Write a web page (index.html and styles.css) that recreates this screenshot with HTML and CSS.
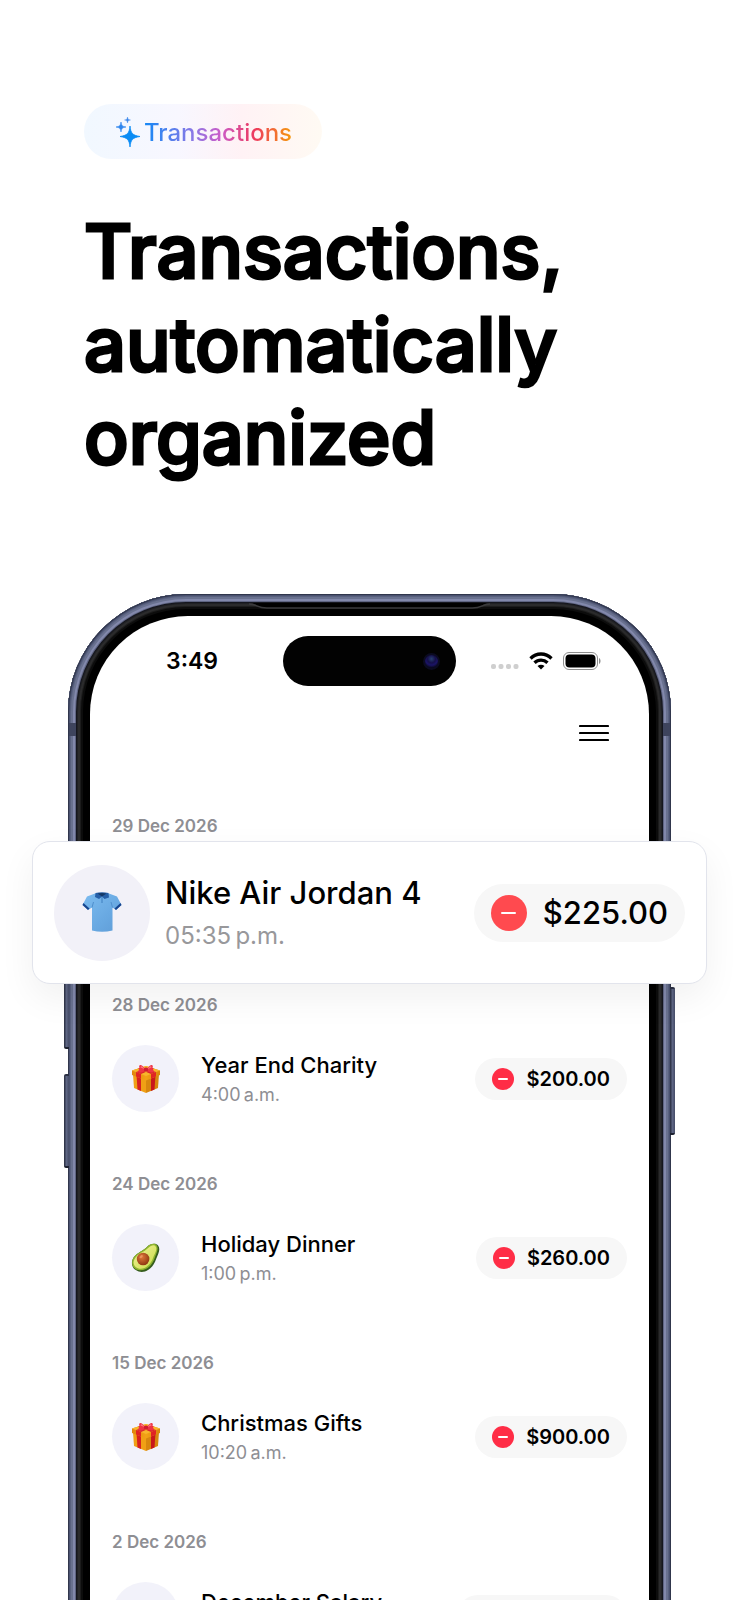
FILE: index.html
```html
<!DOCTYPE html>
<html lang="en">
<head>
  <meta charset="UTF-8" />
  <meta name="viewport" content="width=device-width, initial-scale=1.0"/>
  <title>Transactions, automatically organized</title>
  <link rel="stylesheet" href="styles.css">
</head>
<body>
  <!-- shared drawings -->
  <svg class="defs" width="0" height="0" aria-hidden="true">
    <defs>
      <linearGradient id="shirtFill" x1="0" y1="0" x2="1" y2="1">
        <stop offset="0" stop-color="#7cbcf0"/><stop offset="0.6" stop-color="#69a9e2"/><stop offset="1" stop-color="#5f9cd6"/>
      </linearGradient>
      <linearGradient id="boxFill" x1="0" y1="0" x2="1" y2="0">
        <stop offset="0" stop-color="#e0850c"/><stop offset="0.5" stop-color="#f3a316"/><stop offset="1" stop-color="#d9860c"/>
      </linearGradient>
      <linearGradient id="avoFill" x1="0" y1="0" x2="1" y2="1">
        <stop offset="0" stop-color="#f3f29a"/><stop offset="1" stop-color="#c9dc49"/>
      </linearGradient>
      <radialGradient id="pitFill" cx="0.4" cy="0.35" r="0.7">
        <stop offset="0" stop-color="#e0793a"/><stop offset="1" stop-color="#8a3410"/>
      </radialGradient>
    </defs>
    <symbol id="gift" viewBox="0 0 30 30">
      <path d="M2 10 L15 14.500 V29 L3 24 Z" fill="#f0a015"/>
      <path d="M28 10 L15 14.500 V29 L27 24 Z" fill="#d8870e"/>
      <path d="M5.500 11 L10 13 V27 L6.500 25.500 Z" fill="#d8201f"/>
      <path d="M24.500 11 L20 13 V27 L23.500 25.500 Z" fill="#c9181c"/>
      <path d="M15 2 L29 6.500 V11 L15 16.500 L1 11 V6.500 Z" fill="url(#boxFill)"/>
      <path d="M1 6.500 L15 2 L29 6.500 L15 12 Z" fill="#f8b52b"/>
      <path d="M5 8 L10 10 V14.500 L5 12.500 Z M25 8 L20 10 V14.500 L25 12.500 Z" fill="#e02424"/>
      <path d="M5 8 L19 3.300 L23 4.600 L10 10 Z M25 8 L11 3.300 L7 4.600 L20 10 Z" fill="#d8242a"/>
      <path d="M14 5 C11 0 7 0 8.500 4 L7 8 C10 9.500 13 8 15 6 C17 8 21 9.500 23 7.500 L21.500 4 C23 0 19 0 16 5 Z" fill="#ee3344"/>
      <path d="M13.500 5 C11.500 2 9.500 1.500 9.500 3.500 Z M16.500 5 C18.500 2 20.500 1.500 20.500 3.500 Z" fill="#ff7880"/>
      <rect x="13" y="3.500" width="4" height="4" rx="1.500" fill="#cf1c30"/>
    </symbol>
    <symbol id="avocado" viewBox="0 0 30 30">
      <path d="M28 2 C31 6 28 11 26 16 C23 25 16 31 8 29 C1 27 -1 20 3 14 C7 9 12 8 17 3 C20 0 26 -1 28 2 Z" fill="#355c1d"/>
      <path d="M26.500 1.700 C29 5 26.500 9.500 24.500 15 C22 23 15 29 8 27.500 C1 26 -0.500 19.500 3 14 C7 9 12 8 17 3 C20 0 24.500 -0.500 26.500 1.700 Z" fill="#8fb52f"/>
      <path d="M25.500 3 C27.500 6 25 9.500 23 14.500 C20.500 22 14.500 27 8.500 26 C2.500 24.500 1 19.500 4.500 14.800 C8 10 13 9.500 18 4.500 C20.500 2 24 1 25.500 3 Z" fill="url(#avoFill)"/>
      <circle cx="12.500" cy="16" r="6.500" fill="url(#pitFill)"/>
      <ellipse cx="10.500" cy="13.500" rx="2" ry="1.200" fill="#f2a470" opacity="0.700" transform="rotate(-40 10.500 13.500)"/>
    </symbol>
  </svg>

  <main class="page">
    <header class="hero">
      <div class="badge">
        <svg class="badge-icon" viewBox="0 0 24 30" aria-hidden="true">
          <path fill="#0a8cf5" d="M14 9 C14.800 16.500 16.500 18.200 24 19.500 C16.500 20.800 14.800 22.500 14 30 C13.200 22.500 11.500 20.800 4 19.500 C11.500 18.200 13.200 16.500 14 9 Z" stroke="#0a8cf5" stroke-width="0.8"/>
          <path fill="#2f86ee" d="M5 5 C5.500 8.600 6.400 9.500 10 10 C6.400 10.500 5.500 11.400 5 15 C4.500 11.400 3.600 10.500 0 10 C3.600 9.500 4.500 8.600 5 5 Z" stroke="#2f86ee" stroke-width="0.6"/>
          <path fill="#3a86ea" d="M11.500 0 C11.800 2.200 12.300 2.700 14.500 3 C12.300 3.300 11.800 3.800 11.500 6 C11.200 3.800 10.700 3.300 8.500 3 C10.700 2.700 11.200 2.200 11.500 0 Z" stroke="#3a86ea" stroke-width="0.4"/>
        </svg>
        <span class="badge-text">Transactions</span>
      </div>
      <h1>Transactions,<br>automatically<br>organized</h1>
    </header>

    <section class="phone">
      <span class="side-button volume-up"></span>
      <span class="side-button volume-down"></span>
      <span class="side-button power"></span>
      <span class="band band-left"></span>
      <span class="band band-right"></span>
      <svg class="earpiece" viewBox="0 0 244 8" preserveAspectRatio="none" aria-hidden="true">
        <path d="M0 0 H244 C236 0 236 5 226 5 H18 C8 5 8 0 0 0 Z" fill="#000"/>
        <path d="M0 1 C8 1 8 5 18 5 H226 C236 5 236 1 244 1" fill="none" stroke="#3a3a3c" stroke-width="1.500"/>
      </svg>

      <div class="screen">
        <div class="status-bar">
          <span class="clock">3:49</span>
          <div class="island"><span class="lens"></span></div>
          <div class="status-icons">
            <svg width="28" height="6" viewBox="0 0 28 6" aria-hidden="true">
              <g fill="#cfcfcf"><rect width="5" height="5" rx="2"/><rect x="7.500" width="5" height="5" rx="2"/><rect x="15" width="5" height="5" rx="2"/><rect x="22.500" width="5" height="5" rx="2"/></g>
            </svg>
            <svg class="wifi" width="24" height="18" viewBox="0 0 24 18" aria-hidden="true">
              <g fill="none" stroke="#000" stroke-width="3.300">
                <path d="M1.500 6.500 C7.500 0.500 16.500 0.500 22.500 6.500"/>
                <path d="M5.500 10.800 C9.200 7.200 14.800 7.200 18.500 10.800"/>
              </g>
              <path d="M8.500 14 C10.500 12.200 13.500 12.200 15.500 14 L12 17.500 Z"/>
            </svg>
            <svg width="38" height="18" viewBox="0 0 38 18" aria-hidden="true">
              <rect x="0.500" y="0.500" width="34" height="17" rx="5.500" fill="#fff" stroke="#8e8e8e"/>
              <rect x="2.500" y="2.500" width="30" height="13" rx="4"/>
              <path d="M36 6 C38 7 38 11 36 12 Z" fill="#8e8e8e"/>
            </svg>
          </div>
        </div>

        <nav class="nav">
          <button class="menu-button" type="button" aria-label="Menu">
            <svg width="30" height="18" viewBox="0 0 30 18" aria-hidden="true">
              <path d="M1 2 H29 M1 9 H29 M1 16 H29" stroke="#000" stroke-width="2.200" stroke-linecap="round"/>
            </svg>
          </button>
        </nav>

        <div class="list">
          <section class="group">
            <h2>29 Dec 2026</h2>
            <article class="card">
              <div class="avatar avatar-large">
                <svg width="40" height="41" viewBox="0 0 40 41" aria-hidden="true">
                  <path d="M13 1.500 L5 4.500 L0.500 13 L6 18 L10 15.500 V38.500 Q20 41 30.500 38.500 V15.500 L34 18 L39.500 13 L35 4.500 L27 1.500 Z" fill="url(#shirtFill)"/>
                  <path d="M0.500 13 L6 18 L7.500 16.500 L1.500 11 Z M39.500 13 L34 18 L32.500 16.500 L38.500 11 Z" fill="#17458f"/>
                  <path d="M13.500 1 Q20 -0.500 26.500 1 L27 5.500 L22.500 7 L20 4.500 L17 7 L13 5 Z" fill="#255fa8"/>
                  <path d="M15.500 1.500 Q20 0.500 24.500 1.500 L20 4.500 Z" fill="#143968"/>
                  <path d="M20 5 V11" stroke="#3f7fc0"/>
                  <path d="M10 15.500 L11.500 10 M30.500 15.500 L29 10" stroke="#4f8fcd" fill="none"/>
                </svg>
              </div>
              <div class="details">
                <h3>Nike Air Jordan 4</h3>
                <p>05:35&#8201;p.m.</p>
              </div>
              <div class="amount"><span class="minus"></span>$225.00</div>
            </article>
          </section>

          <section class="group">
            <h2>28 Dec 2026</h2>
            <article class="row">
              <div class="avatar"><svg width="30" height="30" aria-hidden="true"><use href="#gift"/></svg></div>
              <div class="details">
                <h3>Year End Charity</h3>
                <p>4:00&#8201;a.m.</p>
              </div>
              <div class="amount"><span class="minus"></span>$200.00</div>
            </article>
          </section>

          <section class="group">
            <h2>24 Dec 2026</h2>
            <article class="row">
              <div class="avatar"><svg width="29" height="30" aria-hidden="true"><use href="#avocado"/></svg></div>
              <div class="details">
                <h3>Holiday Dinner</h3>
                <p>1:00&#8201;p.m.</p>
              </div>
              <div class="amount"><span class="minus"></span>$260.00</div>
            </article>
          </section>

          <section class="group">
            <h2>15 Dec 2026</h2>
            <article class="row">
              <div class="avatar"><svg width="30" height="30" aria-hidden="true"><use href="#gift"/></svg></div>
              <div class="details">
                <h3>Christmas Gifts</h3>
                <p>10:20&#8201;a.m.</p>
              </div>
              <div class="amount"><span class="minus"></span>$900.00</div>
            </article>
          </section>

          <section class="group">
            <h2>2 Dec 2026</h2>
            <article class="row">
              <div class="avatar"></div>
              <div class="details">
                <h3>December Salary</h3>
                <p>9:00&#8201;a.m.</p>
              </div>
              <div class="amount"><span class="minus"></span>$5,000.00</div>
            </article>
          </section>
        </div>
      </div>
    </section>
  </main>
</body>
</html>
```
FILE: styles.css
```css
* {
  box-sizing: border-box;
}

body {
  margin: 0;
  background: #fff;
  color: #000;
  font-family: Inter, "Liberation Sans", sans-serif;
}

h1, h2, h3, p {
  margin: 0;
}

.defs {
  position: absolute;
}

.page {
  height: 100vh;
  overflow: hidden;
  padding: 104px 68px 0;
}

.hero {
  padding: 0 16px;
}

.badge {
  display: inline-flex;
  align-items: center;
  gap: 4px;
  height: 55px;
  padding: 0 30px 0 32px;
  border-radius: 28px;
  background: linear-gradient(to right, #f1f8ff, #f8f7ff 40%, #fff2f5 66%, #fffaf3);
}

.badge-icon {
  width: 24px;
  height: 30px;
}

.badge-text {
  padding-top: 2px;
  font-size: 24px;
  font-weight: 500;
  background: linear-gradient(to right, #1488f5, #8a78e6 33%, #cb5cc8 52%, #ee3a5c 75%, #f59a0c);
  -webkit-background-clip: text;
  background-clip: text;
  color: transparent;
}

h1 {
  margin-top: 46px;
  font-size: 74px;
  line-height: 93px;
  font-weight: 500;
  -webkit-text-stroke: 3px #000;
  stroke-linejoin: round;
}

/* phone */
.phone {
  position: relative;
  margin-top: 110px;
  padding: 22px 22px 0;
  height: 1250px;
  border-radius: 118px 118px 0 0;
  background: #000;
  box-shadow:
    inset 0 0 0 1px #30364c,
    inset 0 0 0 2px #4a5270,
    inset 0 0 0 3px #59617f,
    inset 0 0 0 5px #69718f,
    inset 0 0 0 7px #8288ab,
    inset 0 0 0 8px #5f6582,
    inset 0 0 0 9px #15161e,
    inset 0 0 0 10px #202124,
    inset 0 0 0 12px #2b2b2c,
    inset 0 0 0 13px #1c1c1c,
    inset 0 0 0 15px #0c0c0c;
}

.screen {
  height: 100%;
  border-radius: 98px 98px 0 0;
  background: #fff;
}

.side-button {
  position: absolute;
  width: 5px;
  background: linear-gradient(to right, #262b3d, #5d6583 50%, #444b66);
  border-top: 2px solid #2b3044;
  border-bottom: 2px solid #1d2130;
}

.volume-up {
  left: -4px;
  top: 360px;
  height: 95px;
  border-radius: 2px 0 0 2px;
}

.volume-down {
  left: -4px;
  top: 480px;
  height: 94px;
  border-radius: 2px 0 0 2px;
}

.power {
  right: -4px;
  top: 393px;
  height: 148px;
  border-radius: 0 2px 2px 0;
}

.band {
  position: absolute;
  top: 129px;
  width: 7px;
  height: 13px;
  background: #3e445d;
}

.band-left {
  left: 1px;
}

.band-right {
  right: 1px;
}

.earpiece {
  position: absolute;
  top: 9px;
  left: 30%;
  width: 40%;
  height: 8px;
}

/* status bar */
.status-bar {
  display: grid;
  grid-template-columns: 1fr 173px 1fr;
  align-items: center;
  padding-top: 20px;
}

.clock {
  padding-left: 76px;
  font-size: 23px;
  font-weight: 600;
}

.island {
  display: flex;
  align-items: center;
  justify-content: flex-end;
  height: 50px;
  padding-right: 16px;
  border-radius: 25px;
  background: #020202;
}

.lens {
  width: 17px;
  height: 17px;
  border-radius: 50%;
  border: 2px solid #0b0b20;
  background: radial-gradient(circle at 50% 30%, #27406f, #15104a 35%, #1b1466 55%, #08081a 80%);
}

.status-icons {
  display: flex;
  align-items: center;
  justify-content: flex-end;
  gap: 10px;
  padding-right: 48px;
}

.status-icons svg:first-child {
  margin-top: 12px;
}

.nav {
  display: flex;
  align-items: center;
  justify-content: flex-end;
  height: 93px;
  padding-right: 40px;
}

.menu-button {
  display: flex;
  padding: 0;
  border: none;
  background: none;
  cursor: pointer;
}

/* transactions */
.list {
  padding: 36px 22px 0;
}

.group {
  min-height: 179px;
}

h2 {
  margin-bottom: 29px;
  color: #8e8e93;
  font-size: 17px;
  line-height: 22px;
  font-weight: 600;
}

.row {
  display: flex;
  align-items: center;
  gap: 22px;
}

.avatar {
  display: flex;
  align-items: center;
  justify-content: center;
  flex: none;
  width: 67px;
  height: 67px;
  border-radius: 50%;
  background: #f2f2fa;
}

.details {
  flex: 1;
  padding-top: 2px;
  white-space: nowrap;
}

h3 {
  font-size: 22px;
  line-height: 30px;
  font-weight: 500;
}

.details p {
  color: #8e8e93;
  font-size: 18px;
  line-height: 30px;
}

.amount {
  display: flex;
  align-items: center;
  gap: 12px;
  height: 42px;
  padding: 0 17px;
  border-radius: 29px;
  background: #f7f7f7;
  font-size: 20px;
  font-weight: 600;
}

.minus {
  display: flex;
  align-items: center;
  justify-content: center;
  width: 22px;
  height: 22px;
  border-radius: 50%;
  background: #ff2d46;
}

.minus::before {
  content: "";
  width: 10px;
  height: 2px;
  border-radius: 1px;
  background: #fff;
}

/* enlarged row that sits over the phone */
.card {
  position: absolute;
  top: 247px;
  left: -36px;
  right: -36px;
  display: flex;
  align-items: center;
  gap: 15px;
  height: 143px;
  padding: 0 21px;
  border: 1px solid #e2e4ec;
  border-radius: 18px;
  background: #fff;
  box-shadow: 0 14px 36px rgba(0, 0, 0, 0.06);
}

.avatar-large {
  width: 96px;
  height: 96px;
  background: #f2f1f8;
}

.card h3 {
  font-size: 31px;
  line-height: 44px;
}

.card .details p {
  color: #98989b;
  font-size: 24px;
  line-height: 42px;
}

.card .amount {
  gap: 16px;
  height: 58px;
  font-size: 31px;
  font-weight: 500;
}

.card .minus {
  width: 36px;
  height: 36px;
  background: #ff4a4f;
}

.card .minus::before {
  width: 15px;
}
```
